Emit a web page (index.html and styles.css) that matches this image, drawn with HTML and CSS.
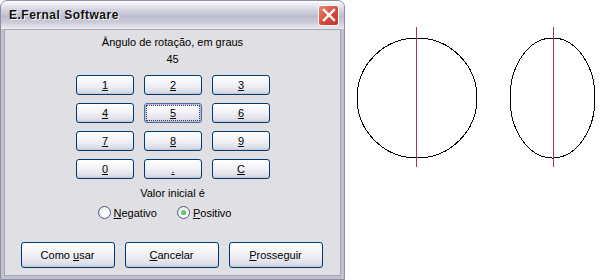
FILE: index.html
```html
<!DOCTYPE html>
<html lang="pt">
<head>
    <meta charset="UTF-8">
    <title>E.Fernal Software</title>
    <link rel="stylesheet" href="styles.css">
</head>
<body>

<div class="window">
    <div class="titlebar">
        <span class="title">E.Fernal Software</span>
        <span class="close">
            <svg width="14" height="14" viewBox="0 0 14 14">
                <path d="M2 2 L12 12 M12 2 L2 12" stroke="#fff" stroke-width="2.4" stroke-linecap="square"/>
            </svg>
        </span>
    </div>
    <div class="client">
        <div class="label">Ângulo de rotação, em graus</div>
        <div class="value">45</div>

        <div class="keypad">
            <button class="btn key"><u>1</u></button>
            <button class="btn key"><u>2</u></button>
            <button class="btn key"><u>3</u></button>
            <button class="btn key"><u>4</u></button>
            <button class="btn key focused"><span class="focus-ring"><u>5</u></span></button>
            <button class="btn key"><u>6</u></button>
            <button class="btn key"><u>7</u></button>
            <button class="btn key"><u>8</u></button>
            <button class="btn key"><u>9</u></button>
            <button class="btn key"><u>0</u></button>
            <button class="btn key"><u>.</u></button>
            <button class="btn key"><u>C</u></button>
        </div>

        <div class="label initial">Valor inicial é</div>
        <div class="radios">
            <label class="radio"><span class="dot"></span><span><u>N</u>egativo</span></label>
            <label class="radio"><span class="dot checked"></span><span><u>P</u>ositivo</span></label>
        </div>

        <div class="actions">
            <button class="btn action">Como <u>u</u>sar</button>
            <button class="btn action"><u>C</u>ancelar</button>
            <button class="btn action"><u>P</u>rosseguir</button>
        </div>
    </div>
</div>

<svg class="canvas" width="260" height="280" viewBox="345 0 260 280">
    <ellipse cx="417" cy="98" rx="60" ry="60" fill="none" stroke="#000" stroke-width="1"/>
    <line x1="416.5" y1="27" x2="416.5" y2="167" stroke="#b03050" stroke-width="1"/>
    <ellipse cx="552.5" cy="98" rx="42.5" ry="60" fill="none" stroke="#000" stroke-width="1"/>
    <line x1="553.5" y1="27" x2="553.5" y2="167" stroke="#b03050" stroke-width="1"/>
</svg>

</body>
</html>
```

FILE: styles.css
```css
body {
    margin: 0;
    background: #fff;
    display: flex;
    font-family: "Liberation Sans", Arial, sans-serif;
    font-size: 11px;
    color: #000;
}
.window {
    width: 345px;
    height: 280px;
    box-sizing: border-box;
    display: flex;
    flex-direction: column;
    background: #c0c0d0;
    border: 1px solid #8f8fa3;
    border-radius: 7px 7px 0 0;
    padding: 0 3px 3px 3px;
}
.titlebar {
    height: 28px;
    margin: 0 -3px;
    padding: 0 5px 0 8px;
    display: flex;
    align-items: center;
    justify-content: space-between;
    border-radius: 6px 6px 0 0;
    background: linear-gradient(#fcfcfe 0%, #dcdce6 25%, #bdbdcf 55%, #c9c9d8 75%, #ececf2 100%);
}
.title {
    font-weight: bold;
    font-size: 12px;
    letter-spacing: 0.5px;
    color: #111;
    text-shadow: 1px 1px 0 #fff;
}
.close {
    width: 21px;
    height: 21px;
    box-sizing: border-box;
    border: 1px solid #fff;
    border-radius: 3px;
    background: linear-gradient(135deg, #e88a70, #d4493a 55%, #c33526);
    display: flex;
    align-items: center;
    justify-content: center;
}
.client {
    flex: 1;
    background: #e0dfe3;
    border: 1px solid #a6a6b6;
    display: flex;
    flex-direction: column;
    align-items: center;
    padding-top: 6px;
}
.label {
    height: 13px;
    line-height: 13px;
}
.value {
    margin-top: 4px;
    height: 13px;
    line-height: 13px;
}
.keypad {
    margin-top: 9px;
    display: grid;
    grid-template-columns: repeat(3, 58px);
    grid-auto-rows: 20px;
    column-gap: 10px;
    row-gap: 8px;
    margin-left: 1px;
}
.btn {
    font: inherit;
    color: #000;
    padding: 0;
    box-sizing: border-box;
    border: 1px solid #003c74;
    border-radius: 3px;
    background: linear-gradient(#ffffff 0%, #f4f4f8 40%, #e2e2ea 80%, #d2d2de 100%);
    box-shadow: inset 0 -1px 0 #c6c6d4;
}
.focused {
    padding: 1px;
    border-color: #4a6fa8;
    box-shadow: inset 0 0 0 1px #a8bde6;
}
.focus-ring {
    display: block;
    height: 100%;
    box-sizing: border-box;
    border: 1px dotted #6a2c3c;
    line-height: 14px;
}
.initial {
    margin-top: 8px;
}
.radios {
    margin-top: 6px;
    display: flex;
    gap: 20px;
    margin-right: 16px;
}
.radio {
    display: flex;
    align-items: center;
    gap: 3px;
}
.dot {
    width: 11px;
    height: 11px;
    border: 1px solid #4a5a7a;
    border-radius: 50%;
    background: radial-gradient(circle at 65% 65%, #ffffff 30%, #dcdce4 100%);
    display: flex;
    align-items: center;
    justify-content: center;
}
.dot.checked::after {
    content: "";
    width: 5px;
    height: 5px;
    border-radius: 50%;
    background: radial-gradient(circle at 40% 40%, #7de27d, #21a121);
}
.actions {
    margin-top: 23px;
    display: flex;
    gap: 10px;
    margin-right: 2px;
}
.action {
    width: 94px;
    height: 26px;
}
.canvas {
    display: block;
    shape-rendering: crispEdges;
}
```
